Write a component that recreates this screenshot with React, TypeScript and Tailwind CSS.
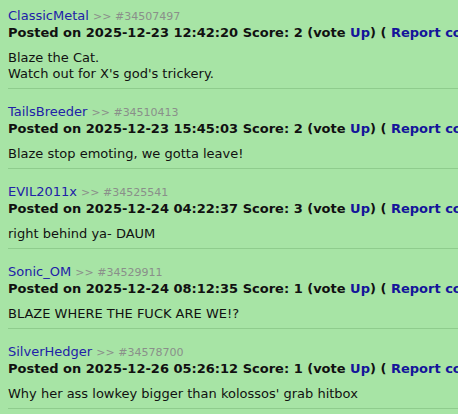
import React from "react";

type Post = { user: string; id: string; date: string; score: number; body: string[] };

const posts: Post[] = [
  { user: "ClassicMetal", id: "34507497", date: "2025-12-23 12:42:20", score: 2, body: ["Blaze the Cat.", "Watch out for X's god's trickery."] },
  { user: "TailsBreeder", id: "34510413", date: "2025-12-23 15:45:03", score: 2, body: ["Blaze stop emoting, we gotta leave!"] },
  { user: "EVIL2011x", id: "34525541", date: "2025-12-24 04:22:37", score: 3, body: ["right behind ya- DAUM"] },
  { user: "Sonic_OM", id: "34529911", date: "2025-12-24 08:12:35", score: 1, body: ["BLAZE WHERE THE FUCK ARE WE!?"] },
  { user: "SilverHedger", id: "34578700", date: "2025-12-26 05:26:12", score: 1, body: ["Why her ass lowkey bigger than kolossos' grab hitbox"] },
];

export default function App() {
  return (
    <div
      className="w-[458px] h-[414px] overflow-hidden bg-[#a7e4a5] text-[#111]"
      style={{ fontFamily: "Verdana, 'DejaVu Sans', sans-serif" }}
    >
      <div className="-mt-[7px]">
        {posts.map((p) => (
          <div key={p.id} className="ml-2 pt-[15px] pb-[6px] border-b border-[#8fcc8d]">
            <div className="leading-[16px] text-[13px] whitespace-nowrap">
              <span className="text-[#2121a8]">{p.user}</span>{" "}
              <span className="text-[11px] text-[#8a8f8a]">&gt;&gt; #{p.id}</span>
            </div>
            <div className="leading-[16px] text-[13px] font-bold whitespace-nowrap overflow-hidden">
              Posted on {p.date} Score: {p.score} (vote <span className="text-[#14149a]">Up</span>) ({" "}
              <span className="text-[#14149a]">Report comment</span> )
            </div>
            <div className="mt-[9px] text-[13px] leading-[16px]">
              {p.body.map((l, i) => (
                <div key={i}>{l}</div>
              ))}
            </div>
          </div>
        ))}
      </div>
    </div>
  );
}
